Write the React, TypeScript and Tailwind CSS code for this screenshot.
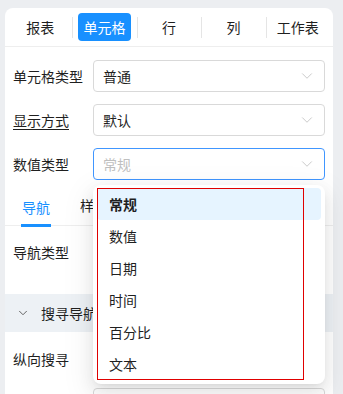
import React from 'react';
import { ChevronDown } from 'lucide-react';

const font = { fontFamily: '"Noto Sans CJK SC", "Noto Sans", sans-serif' };

const tabs = ['报表', '单元格', '行', '列', '工作表'];
const options = ['常规', '数值', '日期', '时间', '百分比', '文本'];

const Select: React.FC<{ value: string; placeholder?: boolean; focused?: boolean }> = ({ value, placeholder, focused }) => (
  <div
    className={`flex h-8 w-[232px] items-center justify-between rounded-[4px] border bg-white pl-[9px] pr-[8px] ${
      focused ? 'border-[#4096ff]' : 'border-[#d9d9d9]'
    }`}
  >
    <span className={`text-[14px] ${placeholder ? 'text-[#bfbfbf]' : 'text-[#1f1f1f]'}`}>{value}</span>
    <ChevronDown size={18} strokeWidth={1.1} className="text-[#bfbfbf]" />
  </div>
);

const FormRow: React.FC<{ label: string; underline?: boolean; children?: React.ReactNode }> = ({ label, underline, children }) => (
  <div className="flex h-8 items-center">
    <span className={`w-[80px] text-[14px] text-[#1f1f1f] ${underline ? 'underline underline-offset-[3px]' : ''}`}>{label}</span>
    {children}
  </div>
);

const App: React.FC = () => {
  return (
    <div className="relative h-[394px] w-[343px] overflow-hidden bg-[#eceef1] pl-[5px] pt-2" style={font}>
      <div className="h-[400px] w-[328px] rounded-t-lg bg-white">
        {/* top tabs */}
        <div className="flex h-[39px] items-center border-b border-[#eeeeee] px-[3px]">
          {tabs.map((t, i) => (
            <div key={t} className="relative flex h-full flex-1 items-center justify-center">
              {i > 0 && <div className="absolute left-0 top-[9px] h-[21px] w-px bg-[#e5e5e5]" />}
              {i === 1 ? (
                <div className="flex h-[28px] w-[53px] items-center justify-center rounded-[4px] bg-[#1890ff] text-[14px] text-white">
                  {t}
                </div>
              ) : (
                <span className="text-[14px] text-[#1f1f1f]">{t}</span>
              )}
            </div>
          ))}
        </div>

        {/* form */}
        <div className="flex flex-col gap-3 px-2 pt-[13px]">
          <FormRow label="单元格类型">
            <Select value="普通" />
          </FormRow>
          <FormRow label="显示方式" underline>
            <Select value="默认" />
          </FormRow>
          <FormRow label="数值类型">
            <Select value="常规" placeholder focused />
          </FormRow>
        </div>

        {/* sub tabs */}
        <div className="mt-[9px] flex h-[37px] items-start gap-[25px] border-b border-[#eeeeee] pl-[12px] pt-[5px]">
          <div className="relative h-full px-[5px]">
            <span className="text-[14px] leading-[22px] text-[#1890ff]">导航</span>
            <div className="absolute bottom-[-2px] left-[4px] right-[4px] h-[3px] bg-[#1890ff]" />
          </div>
          <span className="text-[14px] leading-[22px] text-[#1f1f1f]">样式</span>
        </div>

        <div className="px-2 pt-[10px]">
          <FormRow label="导航类型" />
        </div>

        {/* collapsed section */}
        <div className="mt-[26px] flex h-[38px] items-center bg-[#edf1f5] pl-[11px]">
          <ChevronDown size={14} strokeWidth={1.6} className="text-[#595959]" />
          <span className="ml-[11px] text-[14px] text-[#1f1f1f]">搜寻导航</span>
        </div>

        <div className="px-2 pt-[11px]">
          <FormRow label="纵向搜寻" />
        </div>
        <div className="px-2 pt-[13px]">
          <div className="ml-[80px]">
            <Select value="" />
          </div>
        </div>
      </div>

      {/* dropdown */}
      <div className="absolute left-[93px] top-[185px] h-[199px] w-[232px] rounded-lg bg-white px-1 pt-[3px] shadow-[0_6px_16px_0_rgba(0,0,0,0.08),0_3px_6px_-4px_rgba(0,0,0,0.12),0_9px_28px_8px_rgba(0,0,0,0.05)]">
        {options.map((o, i) => (
          <div
            key={o}
            className={`flex h-8 items-center rounded-[4px] pl-3 text-[14px] text-[#1f1f1f] ${
              i === 0 ? 'bg-[#e6f4ff] font-semibold' : ''
            }`}
          >
            {o}
          </div>
        ))}
      </div>
      <div className="pointer-events-none absolute left-[97px] top-[188px] h-[192px] w-[207px] border border-[#e00000]" />
    </div>
  );
};

export default App;
